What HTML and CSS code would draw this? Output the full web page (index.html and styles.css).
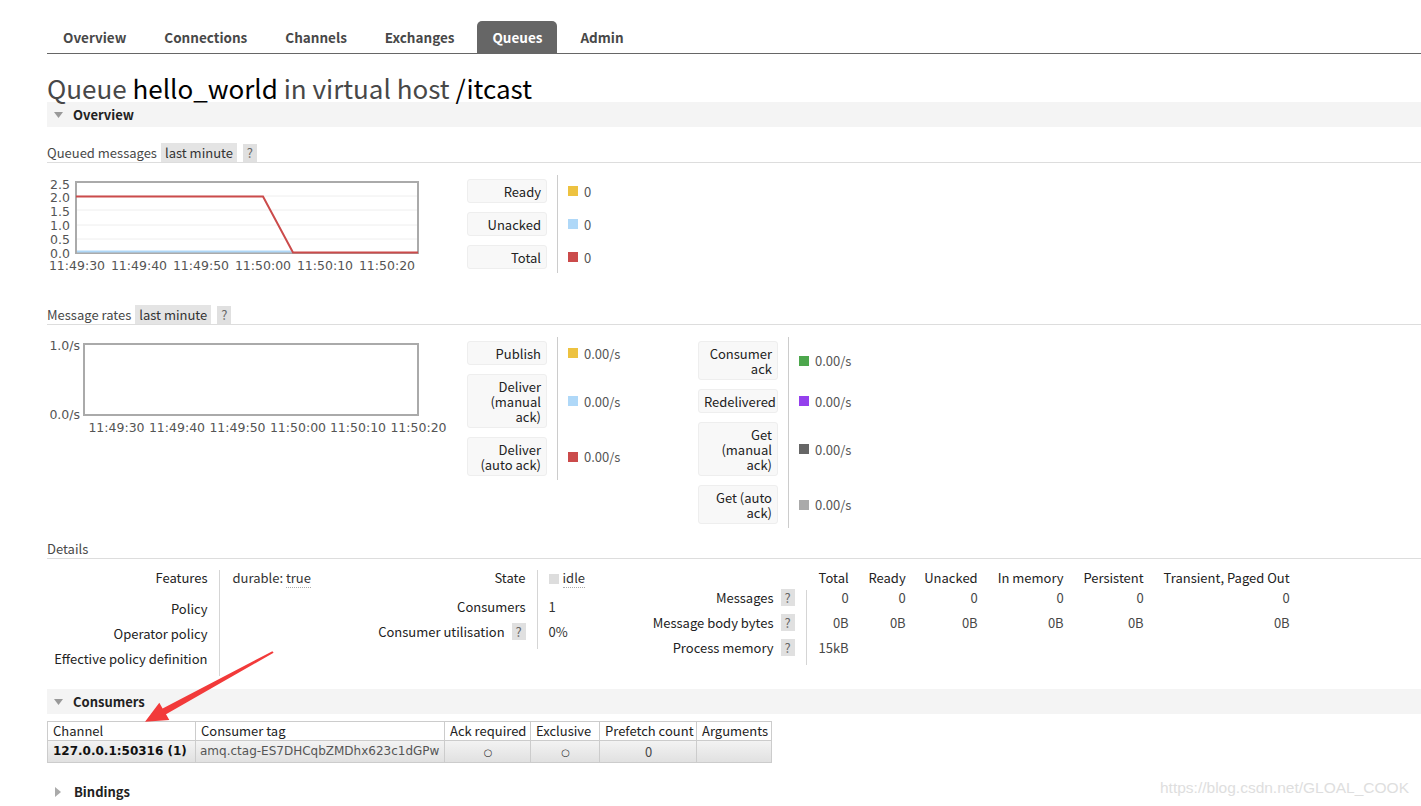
FILE: index.html
```html
<!DOCTYPE html>
<html>
<head>
<meta charset="utf-8">
<title>Queue hello_world</title>
<link rel="stylesheet" href="styles.css">
</head>
<body>
<div class="page">
  <ul class="tabs">
    <li>Overview</li>
    <li>Connections</li>
    <li>Channels</li>
    <li>Exchanges</li>
    <li class="active">Queues</li>
    <li>Admin</li>
  </ul>

  <h1><span class="muted">Queue</span> hello_world <span class="muted">in virtual host</span> /itcast</h1>

  <div class="section-bar"><svg class="tri" width="9" height="6" viewBox="0 0 9 6"><polygon points="0,0 9,0 4.5,6"/></svg>Overview</div>

  <h3 class="sub s-queued">Queued messages <span class="tag">last minute</span><span class="help">?</span></h3>

  <div class="chart-row">
    <div class="chart">
      <svg width="390" height="100" class="plot">
        <g class="grid">
          <line x1="30" y1="21" x2="370" y2="21"/>
          <line x1="30" y1="35" x2="370" y2="35"/>
          <line x1="30" y1="50" x2="370" y2="50"/>
          <line x1="30" y1="64" x2="370" y2="64"/>
        </g>
        <rect class="frame" x="29" y="7" width="342" height="71"/>
        <polyline class="ln-blue" points="30,76.5 246,76.5"/>
        <polyline class="ln-red" points="29,21.5 216,21.5 246,77.5 371,77.5"/>
        <g class="ylab">
          <text x="23" y="13.5">2.5</text>
          <text x="23" y="26.5">2.0</text>
          <text x="23" y="40.5">1.5</text>
          <text x="23" y="54.5">1.0</text>
          <text x="23" y="68.5">0.5</text>
          <text x="23" y="82.5">0.0</text>
        </g>
        <g class="xlab">
          <text x="30" y="94.5">11:49:30</text>
          <text x="92" y="94.5">11:49:40</text>
          <text x="154" y="94.5">11:49:50</text>
          <text x="216" y="94.5">11:50:00</text>
          <text x="278" y="94.5">11:50:10</text>
          <text x="340" y="94.5">11:50:20</text>
        </g>
      </svg>
    </div>
    <div class="legend">
      <div class="lbl">Ready</div><div class="val"><i class="sw c-yellow"></i>0</div>
      <div class="lbl">Unacked</div><div class="val"><i class="sw c-blue"></i>0</div>
      <div class="lbl">Total</div><div class="val"><i class="sw c-red"></i>0</div>
    </div>
  </div>

  <h3 class="sub s-rates">Message rates <span class="tag">last minute</span><span class="help">?</span></h3>

  <div class="chart-row">
    <div class="chart">
      <svg width="410" height="100" class="plot">
        <rect class="frame" x="37" y="7" width="334" height="71"/>
        <g class="ylab">
          <text x="33" y="12.5">1.0/s</text>
          <text x="33" y="81.5">0.0/s</text>
        </g>
        <g class="xlab">
          <text x="69.5" y="94.5">11:49:30</text>
          <text x="130" y="94.5">11:49:40</text>
          <text x="190.5" y="94.5">11:49:50</text>
          <text x="251" y="94.5">11:50:00</text>
          <text x="311" y="94.5">11:50:10</text>
          <text x="371.5" y="94.5">11:50:20</text>
        </g>
      </svg>
    </div>
    <div class="legend legend-left">
      <div class="lbl">Publish</div><div class="val"><i class="sw c-yellow"></i>0.00/s</div>
      <div class="lbl">Deliver<br>(manual<br>ack)</div><div class="val"><i class="sw c-blue"></i>0.00/s</div>
      <div class="lbl">Deliver<br>(auto ack)</div><div class="val"><i class="sw c-red"></i>0.00/s</div>
    </div>
    <div class="legend">
      <div class="lbl">Consumer<br>ack</div><div class="val"><i class="sw c-green"></i>0.00/s</div>
      <div class="lbl">Redelivered</div><div class="val"><i class="sw c-purple"></i>0.00/s</div>
      <div class="lbl">Get<br>(manual<br>ack)</div><div class="val"><i class="sw c-dark"></i>0.00/s</div>
      <div class="lbl">Get (auto<br>ack)</div><div class="val"><i class="sw c-grey"></i>0.00/s</div>
    </div>
  </div>

  <h3 class="sub s-details">Details</h3>

  <div class="details">
    <table class="facts t1">
      <colgroup><col class="w172"><col class="w141"></colgroup>
      <tr class="h31"><th>Features</th><td>durable: <abbr>true</abbr></td></tr>
      <tr class="h25"><th>Policy</th><td></td></tr>
      <tr class="h25"><th>Operator policy</th><td></td></tr>
      <tr class="h25"><th>Effective policy definition</th><td></td></tr>
    </table>
    <table class="facts t2">
      <colgroup><col class="w177"><col class="w103"></colgroup>
      <tr class="h29"><th>State</th><td><i class="state"></i><abbr>idle</abbr></td></tr>
      <tr class="h25"><th>Consumers</th><td>1</td></tr>
      <tr class="h25"><th>Consumer utilisation <span class="help">?</span></th><td>0%</td></tr>
    </table>
    <table class="facts t3">
      <colgroup><col class="w166"><col class="w42"><col class="w57"><col class="w72"><col class="w86"><col class="w80"><col class="w146"></colgroup>
      <tr class="h20 head"><td class="blank"></td><td class="first">Total</td><td>Ready</td><td>Unacked</td><td>In memory</td><td>Persistent</td><td>Transient, Paged Out</td></tr>
      <tr class="h25"><th>Messages <span class="help">?</span></th><td class="first">0</td><td>0</td><td>0</td><td>0</td><td>0</td><td>0</td></tr>
      <tr class="h25"><th>Message body bytes <span class="help">?</span></th><td class="first">0B</td><td>0B</td><td>0B</td><td>0B</td><td>0B</td><td>0B</td></tr>
      <tr class="h25"><th>Process memory <span class="help">?</span></th><td class="first">15kB</td><td></td><td></td><td></td><td></td><td></td></tr>
    </table>
  </div>

  <div class="section-bar s-consumers"><svg class="tri" width="9" height="6" viewBox="0 0 9 6"><polygon points="0,0 9,0 4.5,6"/></svg>Consumers</div>

  <table class="list">
    <colgroup><col class="c1"><col class="c2"><col class="c3"><col class="c4"><col class="c5"><col class="c6"></colgroup>
    <thead>
      <tr><th>Channel</th><th>Consumer tag</th><th>Ack required</th><th>Exclusive</th><th>Prefetch count</th><th>Arguments</th></tr>
    </thead>
    <tbody>
      <tr><td class="chan">127.0.0.1:50316 (1)</td><td class="ctag">amq.ctag-ES7DHCqbZMDhx623c1dGPw</td><td class="ctr"><span class="dot">○</span></td><td class="ctr"><span class="dot">○</span></td><td class="ctr">0</td><td></td></tr>
    </tbody>
  </table>

  <div class="collapsed"><svg class="tri-r" width="6" height="10" viewBox="0 0 6 10"><polygon points="0,0 6,5 0,10"/></svg>Bindings</div>
</div>

<svg class="arrow" width="1421" height="806" viewBox="0 0 1421 806">
  <polygon points="145,721.7 159.3,702.8 162.6,708.6 272.4,651.2 273.6,652.8 166,714.2 169.3,720"/>
</svg>

<div class="watermark">https://blog.csdn.net/GLOAL_COOK</div>
</body>
</html>
```

FILE: styles.css
```css
html, body {
  margin: 0;
  padding: 0;
  background: #fff;
}
body {
  font-family: "Noto Sans CJK SC", "Noto Sans", sans-serif;
  font-size: 13px;
  color: #333;
  overflow: hidden;
  position: relative;
  width: 1421px;
  height: 806px;
}
.page {
  padding-left: 47px;
}

/* tabs */
.tabs {
  list-style: none;
  margin: 0;
  padding: 21px 0 0 1px;
  display: flex;
  gap: 8px;
  border-bottom: 1px solid #666;
}
.tabs li {
  height: 32px;
  line-height: 32px;
  padding: 0 15px;
  font-size: 13.5px;
  font-weight: bold;
  color: #484848;
  border-radius: 5px 5px 0 0;
}
.tabs li.active {
  background: #666;
  color: #fff;
}

/* title */
h1 {
  margin: 20px 0 0;
  font-size: 26px;
  line-height: 28px;
  font-weight: normal;
  color: #000;
}
h1 .muted { color: #484848; }

/* section bars */
.section-bar {
  height: 25px;
  line-height: 25px;
  background: #f4f4f4;
  font-weight: bold;
  color: #222;
  display: flex;
  align-items: center;
}
.section-bar .tri {
  fill: #999;
  margin: 0 10px 0 7px;
}
.s-consumers { margin-top: 13px; }

/* sub headings */
.sub {
  margin: 0;
  height: 19px;
  line-height: 19px;
  font-size: 13px;
  font-weight: normal;
  color: #484848;
  border-bottom: 1px solid #ddd;
  display: flex;
  align-items: center;
}
.s-queued { margin-top: 16px; }
.s-rates { margin-top: 30px; }
.s-details { margin-top: 11px; }
.tag {
  background: #e4e4e4;
  padding: 0 4px;
  height: 19px;
  margin-left: 4px;
  color: #333;
}
.help {
  display: inline-block;
  background: #e0e0e0;
  color: #666;
  width: 14px;
  height: 18px;
  line-height: 18px;
  text-align: center;
  margin-left: 6px;
}

/* charts */
.chart-row {
  display: flex;
  align-items: flex-start;
  margin-top: 12px;
}
.chart {
  width: 420px;
  height: 100px;
  flex: none;
}
.plot { display: block; overflow: visible; }
.plot .frame { fill: none; stroke: #aaa; stroke-width: 2; }
.plot .grid line { stroke: #eee; stroke-width: 1; }
.plot .ln-red { fill: none; stroke: #cb4b4b; stroke-width: 2; }
.plot .ln-blue { fill: none; stroke: #afd8f8; stroke-width: 2; }
.plot text {
  font-family: "DejaVu Sans", Verdana, sans-serif;
  font-size: 12.5px;
  fill: #545454;
}
.plot .ylab text { text-anchor: end; }
.plot .xlab text { text-anchor: middle; }

/* legends */
.legend {
  display: grid;
  grid-template-columns: 80px auto;
  row-gap: 9px;
  padding: 4px 0;
  background: linear-gradient(#ccc, #ccc) 90px 0 / 1px 100% no-repeat;
  flex: none;
}
.legend-left { width: 231px; }
.lbl {
  background: #f8f8f8;
  border: 1px solid #eee;
  border-radius: 3px;
  text-align: right;
  padding: 4px 5px 3px;
  line-height: 15px;
  color: #222;
}
.val {
  display: flex;
  align-items: center;
  padding-left: 21px;
  color: #555;
  white-space: nowrap;
}
.sw {
  display: inline-block;
  width: 10px;
  height: 10px;
  margin-right: 6px;
}
.c-yellow { background: #edc240; }
.c-blue { background: #afd8f8; }
.c-red { background: #cb4b4b; }
.c-green { background: #4da74d; }
.c-purple { background: #9440ed; }
.c-dark { background: #666; }
.c-grey { background: #aaa; }

/* details */
.details {
  display: flex;
  align-items: flex-start;
  margin-top: 11px;
}
.facts {
  border-collapse: collapse;
  table-layout: fixed;
  line-height: 15px;
}
.facts th, .facts td {
  padding: 0;
  vertical-align: top;
  white-space: nowrap;
}
.facts th {
  font-weight: normal;
  text-align: right;
  padding-right: 11px;
  border-right: 1px solid #d5d5d5;
  color: #222;
}
.t1 { width: 313px; }
.t2 { width: 280px; }
.t1 td { padding-left: 13px; }
.t2 td { padding-left: 11px; }
.t3 td { text-align: right; color: #484848; }
.t3 td.first { padding-left: 12px; }
.t3 .head td { color: #222; }
.t3 .blank { border: none; }
.facts .help { height: 17px; line-height: 17px; margin-left: 4px; vertical-align: top; margin-top: -1px; }
.w172 { width: 172px; } .w141 { width: 141px; }
.w177 { width: 177px; } .w103 { width: 103px; }
.w166 { width: 166px; } .w42 { width: 42px; } .w57 { width: 57px; }
.w72 { width: 72px; } .w86 { width: 86px; } .w80 { width: 80px; } .w146 { width: 146px; }
.h31 { height: 31px; }
.h29 { height: 29px; }
.h25 { height: 25px; }
.h20 { height: 20px; }
abbr {
  text-decoration: none;
  border-bottom: 1px dotted #aaa;
}
.state {
  display: inline-block;
  width: 10px;
  height: 10px;
  background: #ddd;
  margin-right: 4px;
  vertical-align: -1px;
}

/* consumer list */
.list {
  margin-top: 7px;
  border-collapse: collapse;
  table-layout: fixed;
  width: 724px;
}
.c1 { width: 148px; } .c2 { width: 249px; } .c3 { width: 86px; }
.c4 { width: 69px; } .c5 { width: 97px; } .c6 { width: 75px; }
.list th, .list td {
  border: 1px solid #ccc;
  white-space: nowrap;
  overflow: hidden;
  padding: 0 4px 0 5px;
}
.list th {
  font-weight: normal;
  text-align: left;
  height: 18px;
  line-height: 18px;
  color: #222;
}
.list tbody tr {
  background: linear-gradient(#f3f3f3, #e0e0e0);
}
.list td {
  height: 19px;
  line-height: 19px;
  color: #484848;
}
.list .chan {
  font-family: "DejaVu Sans", Verdana, sans-serif;
  font-weight: bold;
  font-size: 12px;
  color: #111;
}
.list .ctag {
  font-family: "DejaVu Sans", Verdana, sans-serif;
  font-size: 12px;
  padding-left: 4px;
  color: #555;
}
.list .ctr { text-align: center; }
.dot { font-size: 10px; color: #333; font-family: "DejaVu Sans", sans-serif; }

/* bindings */
.collapsed {
  margin-top: 16px;
  height: 25px;
  line-height: 25px;
  font-weight: bold;
  color: #222;
  display: flex;
  align-items: center;
}
.tri-r { fill: #aaa; margin: 0 13px 0 8px; }

/* overlays */
.arrow {
  position: absolute;
  left: 0;
  top: 0;
  pointer-events: none;
}
.arrow polygon { fill: #f23a3a; }
.watermark {
  position: absolute;
  left: 1160px;
  top: 779px;
  font-family: "Liberation Sans", Arial, sans-serif;
  font-size: 15.5px;
  color: #dedede;
  white-space: nowrap;
}
```
